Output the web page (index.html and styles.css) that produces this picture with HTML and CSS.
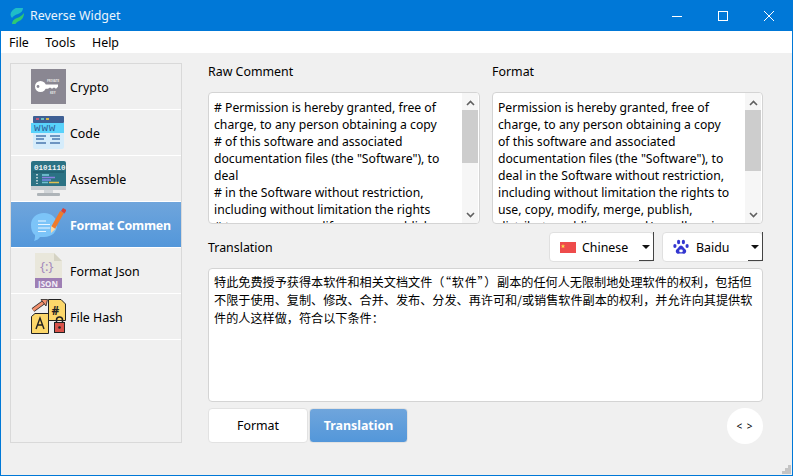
FILE: index.html
```html
<!DOCTYPE html>
<html lang="en">

<head>
    <meta charset="UTF-8">
    <meta name="viewport" content="width=device-width, initial-scale=1.0">
    <title>Reverse Widget</title>
    <link rel="stylesheet" href="styles.css">
</head>

<body>
    <div class="window">
        <div class="titlebar">
            <svg class="app-logo" width="14" height="16" viewBox="0 0 14 16">
                <path d="M6 0H13C13 3 11 5 8 6C5 7 3 8 2 10C0 8 0 5 2 3C3 1.500 4.500 0.500 6 0Z" fill="#1fbcc8" />
                <path d="M14 5C14 9 12 12 9 13C7 14 6 15 5.500 16H2C2 13 4 11 7 10C10 9 12 7.500 14 5Z" fill="#2fc873" />
            </svg>
            <span class="app-title">Reverse Widget</span>
            <div class="win-buttons">
                <div class="win-btn">
                    <svg width="10" height="10" viewBox="0 0 10 10"><path d="M0 5.500H10" stroke="#fff" /></svg>
                </div>
                <div class="win-btn">
                    <svg width="10" height="10" viewBox="0 0 10 10"><rect x="0.500" y="0.500" width="9" height="9" fill="none" stroke="#fff" /></svg>
                </div>
                <div class="win-btn">
                    <svg width="10" height="10" viewBox="0 0 10 10"><path d="M0 0L10 10M10 0L0 10" stroke="#fff" /></svg>
                </div>
            </div>
        </div>

        <div class="menubar">
            <span>File</span>
            <span>Tools</span>
            <span>Help</span>
        </div>

        <div class="main">
            <div class="sidebar">
                <div class="nav-item">
                    <svg class="nav-icon" viewBox="0 0 35 35">
                        <rect width="35" height="35" fill="#8a8792" />
                        <circle cx="9.500" cy="17.500" r="5.500" fill="#fff" />
                        <path d="M13 15.500H27V17.800L25 19.800L23 18.500L21 19.800L19 18.500L17 19.800H13Z" fill="#fff" />
                        <circle cx="7" cy="17.500" r="1.400" fill="#8a8792" />
                        <text x="16" y="13" class="key-text">PRIVATE</text>
                        <text x="19" y="25" class="key-text">KEY</text>
                    </svg>
                    <span class="nav-label">Crypto</span>
                </div>
                <div class="nav-item">
                    <svg class="nav-icon" viewBox="0 0 35 35">
                        <rect x="2" y="1" width="31" height="33" rx="2" fill="#d5ecfb" />
                        <rect x="2" y="1" width="31" height="7" rx="1" fill="#3e5f94" />
                        <rect x="5" y="3" width="3" height="2" fill="#c05a7a" />
                        <rect x="10" y="3" width="3" height="2" fill="#6fc0c0" />
                        <rect x="15" y="3" width="3" height="2" fill="#d8b84a" />
                        <rect x="0" y="8" width="33" height="10" fill="#59d2fb" />
                        <text x="3" y="16" class="www-text">www</text>
                        <path d="M5 21H15M5 24H13M5 28H15M19 21H29M21 24H29M19 28H29" stroke="#4a78b0" stroke-width="1.300" />
                    </svg>
                    <span class="nav-label">Code</span>
                </div>
                <div class="nav-item">
                    <svg class="nav-icon" viewBox="0 0 35 35">
                        <rect x="0" y="0" width="35" height="27" rx="2" fill="#2b7284" />
                        <rect x="0" y="25" width="35" height="4" fill="#c6ccd0" />
                        <rect x="13" y="29" width="9" height="3" fill="#d3d7da" />
                        <rect x="6" y="32" width="23" height="3" rx="1" fill="#aeb4b8" />
                        <text x="3" y="9" class="bin-text">0101110</text>
                        <path d="M2 11H33" stroke="#1c5564" />
                        <path d="M6 13V23" stroke="#dfe8ea" stroke-dasharray="1.500 1.500" stroke-width="1.500" />
                        <path d="M11 14H18" stroke="#7fd0e0" stroke-width="1.500" />
                        <path d="M11 16.500H24" stroke="#8a7fe0" stroke-width="1.500" />
                        <path d="M11 19H20" stroke="#7a8ae8" stroke-width="1.500" />
                        <path d="M11 21.500H17" stroke="#6fc0d0" stroke-width="1.500" />
                        <path d="M18 21.500H28" stroke="#e0c050" stroke-width="1.500" />
                    </svg>
                    <span class="nav-label">Assemble</span>
                </div>
                <div class="nav-item active">
                    <svg class="nav-icon" viewBox="0 0 35 35">
                        <path d="M13 6C21 6 26 11 26 18C26 25 21 30 13 30C12 30 10 30 9 30C8 32 6 33 3 34C4 32 4 30 4 28C1 26 0 22 0 18C0 11 5 6 13 6Z" fill="#7cc4f8" />
                        <path d="M7 14H15M7 17.500H19M7 21H19M7 24.500H15" stroke="#e8f5ff" stroke-width="1.100" />
                        <path d="M22 21L31 5" stroke="#f07a2a" stroke-width="4.500" />
                        <path d="M30 4L32 1L35.500 3L33.500 6.500Z" fill="#d8413a" />
                        <path d="M20 19L24.500 22L20 26Z" fill="#f8d8a8" />
                    </svg>
                    <span class="nav-label">Format Comment</span>
                </div>
                <div class="nav-item">
                    <svg class="nav-icon" viewBox="0 0 35 35">
                        <path d="M4 0H23L31 8V27H4Z" fill="#e9e7db" />
                        <path d="M23 0L31 8H23Z" fill="#d5d3c4" />
                        <rect x="4" y="25" width="27" height="10" fill="#9e7fb4" />
                        <text x="7" y="33.500" class="json-text">JSON</text>
                        <text x="9" y="18" class="brace-text">{:}</text>
                    </svg>
                    <span class="nav-label">Format Json</span>
                </div>
                <div class="nav-item">
                    <svg class="nav-icon" viewBox="0 0 35 35">
                        <path d="M2 11L13 3" stroke="#222" stroke-width="4.500" />
                        <path d="M2 11L13 3" stroke="#f2906e" stroke-width="2.800" />
                        <path d="M10 0.500L16.500 0.500L15 7Z" fill="#f2906e" stroke="#222" stroke-width="0.800" />
                        <path d="M0.500 17.500L4 14.500H17.500V34.500H0.500Z" fill="#fcd76a" stroke="#222" />
                        <path d="M17.500 0.500H30L34.500 5V21.500H17.500Z" fill="#fcd76a" stroke="#222" />
                        <text x="20.500" y="15.500" class="hash-text">#</text>
                        <path d="M5 30L9 19L13 30M6.500 26H11.500" fill="none" stroke="#222" stroke-width="1.400" />
                        <rect x="23.500" y="23.500" width="10" height="10" fill="#d9534a" stroke="#222" />
                        <path d="M25.500 23.500V21A3 3 0 0 1 31.500 21V23.500" fill="none" stroke="#222" stroke-width="1.500" />
                        <circle cx="28.500" cy="28.500" r="1.300" fill="#222" />
                    </svg>
                    <span class="nav-label">File Hash</span>
                </div>
            </div>

            <div class="content">
                <div class="top-row">
                    <div class="text-col">
                        <div class="label">Raw Comment</div>
                        <div class="text-box">
                            <div class="text-body">
                                # Permission is hereby granted, free of<br>
                                charge, to any person obtaining a copy<br>
                                # of this software and associated<br>
                                documentation files (the "Software"), to<br>
                                deal<br>
                                # in the Software without restriction,<br>
                                including without limitation the rights<br>
                                # to use, copy, modify, merge, publish,
                            </div>
                            <div class="scrollbar">
                                <svg class="arrow" width="9" height="6" viewBox="0 0 9 6"><path d="M1 5L4.500 1.500L8 5" fill="none" stroke="#606060" stroke-width="1.600" /></svg>
                                <div class="thumb thumb-raw"></div>
                                <svg class="arrow arrow-down" width="9" height="6" viewBox="0 0 9 6"><path d="M1 1L4.500 4.500L8 1" fill="none" stroke="#606060" stroke-width="1.600" /></svg>
                            </div>
                        </div>
                    </div>
                    <div class="text-col">
                        <div class="label">Format</div>
                        <div class="text-box">
                            <div class="text-body">
                                Permission is hereby granted, free of<br>
                                charge, to any person obtaining a copy<br>
                                of this software and associated<br>
                                documentation files (the "Software"), to<br>
                                deal in the Software without restriction,<br>
                                including without limitation the rights to<br>
                                use, copy, modify, merge, publish,<br>
                                distribute, sublicense, and/or sell copies
                            </div>
                            <div class="scrollbar">
                                <svg class="arrow" width="9" height="6" viewBox="0 0 9 6"><path d="M1 5L4.500 1.500L8 5" fill="none" stroke="#606060" stroke-width="1.600" /></svg>
                                <div class="thumb thumb-format"></div>
                                <svg class="arrow arrow-down" width="9" height="6" viewBox="0 0 9 6"><path d="M1 1L4.500 4.500L8 1" fill="none" stroke="#606060" stroke-width="1.600" /></svg>
                            </div>
                        </div>
                    </div>
                </div>

                <div class="trans-head">
                    <div class="label">Translation</div>
                    <div class="combos">
                        <div class="combo combo-lang">
                            <svg width="16" height="11" viewBox="0 0 16 11">
                                <rect width="16" height="11" fill="#ee4b4b" />
                                <path d="M3 2L3.600 3.600L5 3.600L4 4.600L4.400 6L3 5.200L1.600 6L2 4.600L1 3.600L2.400 3.600Z" fill="#fbd84a" />
                            </svg>
                            <span>Chinese</span>
                        </div>
                        <div class="combo combo-engine">
                            <svg width="16" height="16" viewBox="0 0 16 16" fill="#3336d0">
                                <ellipse cx="5.600" cy="3" rx="1.600" ry="2.200" />
                                <ellipse cx="10.400" cy="3" rx="1.600" ry="2.200" />
                                <ellipse cx="1.900" cy="7" rx="1.600" ry="2" />
                                <ellipse cx="14.100" cy="7" rx="1.600" ry="2" />
                                <path d="M8 6.500C10 6.500 10.500 9 12.500 10.500C14 12 13 15 10.500 14.800C9.500 14.700 9 14.500 8 14.500C7 14.500 6.500 14.700 5.500 14.800C3 15 2 12 3.500 10.500C5.500 9 6 6.500 8 6.500Z" />
                                <rect x="6.300" y="10.500" width="3.400" height="2.800" rx="1" fill="#fff" />
                            </svg>
                            <span>Baidu</span>
                        </div>
                    </div>
                </div>

                <div class="trans-box">
                    特此免费授予获得本软件和相关文档文件<span class="quoted">（“软件”）</span>副本的任何人无限制地处理软件的权利，包括但<br>
                    不限于使用、复制、修改、合并、发布、分发、再许可和/或销售软件副本的权利，并允许向其提供软<br>
                    件的人这样做，符合以下条件：
                </div>

                <div class="bottom-row">
                    <div class="tabs">
                        <div class="tab">Format</div>
                        <div class="tab tab-active">Translation</div>
                    </div>
                    <div class="round-btn">&lt; &gt;</div>
                </div>
            </div>
        </div>

        <svg class="size-grip" width="9" height="9" viewBox="0 0 9 9" fill="#c4c4c4">
            <rect x="6" y="0" width="3" height="3" />
            <rect x="3" y="3" width="3" height="3" />
            <rect x="6" y="3" width="3" height="3" />
            <rect x="0" y="6" width="3" height="3" />
            <rect x="3" y="6" width="3" height="3" />
            <rect x="6" y="6" width="3" height="3" />
        </svg>
    </div>
</body>

</html>
```

FILE: styles.css
```css
body {
    font-family: "Noto Sans", "Noto Sans CJK SC", sans-serif;
    font-size: 12.4px;
    margin: 0;
    padding: 0;
    background-color: #f0f0f0;
    overflow: hidden;
}

.window {
    position: relative;
    box-sizing: border-box;
    width: 793px;
    height: 476px;
    border: 1px solid #0078d7;
    border-top: none;
    display: flex;
    flex-direction: column;
    color: #000;
}

.titlebar {
    height: 31px;
    flex: none;
    background-color: #0078d7;
    color: #fff;
    display: flex;
    align-items: center;
    padding-left: 9px;
}

.app-logo {
    margin-right: 6px;
}

.app-title {
    color: #eaf4fc;
}

.win-buttons {
    margin-left: auto;
    display: flex;
}

.win-btn {
    width: 46px;
    height: 31px;
    display: flex;
    align-items: center;
    justify-content: center;
}

.menubar {
    height: 22px;
    flex: none;
    background-color: #fff;
    display: flex;
    align-items: center;
    gap: 16.5px;
    padding-left: 8px;
}

.main {
    flex: 1;
    display: flex;
    padding: 10px 29px 0 9px;
}

.sidebar {
    box-sizing: border-box;
    width: 172px;
    height: 380px;
    flex: none;
    border: 1px solid #d9d9d9;
    overflow: hidden;
}

.nav-item {
    height: 45px;
    border-bottom: 1px solid #fff;
    display: flex;
    align-items: center;
    padding: 0 10px 0 20px;
    gap: 4px;
    white-space: nowrap;
}

.nav-icon {
    width: 35px;
    height: 35px;
    flex: none;
}

.nav-label {
    min-width: 0;
    overflow: hidden;
    padding-top: 2px;
}

.nav-item.active {
    background: linear-gradient(#6fa5dc, #5397da);
    color: #fff;
    font-weight: bold;
    letter-spacing: -0.2px;
}

.key-text {
    font-size: 3px;
    fill: #e8e8e8;
    font-weight: bold;
}

.www-text {
    font-size: 11px;
    fill: #2f5f98;
    font-family: "Liberation Mono", monospace;
    letter-spacing: 0.8px;
}

.bin-text {
    font-size: 7.5px;
    fill: #f0f4f5;
    font-family: "Liberation Mono", monospace;
    font-weight: bold;
}

.json-text {
    font-size: 8px;
    fill: #f4eef8;
    font-weight: bold;
}

.brace-text {
    font-size: 13px;
    fill: #a48abb;
}

.hash-text {
    font-size: 12px;
    fill: #222;
    font-weight: bold;
}

.content {
    flex: 1;
    margin-left: 26px;
    min-width: 0;
    display: flex;
    flex-direction: column;
}

.top-row {
    display: flex;
    gap: 12px;
}

.text-col {
    flex: 1;
    min-width: 0;
}

.text-col:first-child {
    flex: none;
    width: 272px;
}

.label {
    height: 17px;
    line-height: 17px;
}

.text-col .label {
    margin-bottom: 12px;
}

.text-box {
    box-sizing: border-box;
    height: 132px;
    background-color: #fff;
    border: 1px solid #d4d4d4;
    border-radius: 4px;
    display: flex;
    overflow: hidden;
}

.text-body {
    flex: 1;
    min-width: 0;
    padding: 6px 0 0 5px;
    font-size: 12.2px;
    line-height: 17px;
    white-space: nowrap;
    overflow: hidden;
}

.scrollbar {
    width: 16px;
    flex: none;
    margin-right: 1px;
    background-color: #f6f6f6;
    display: flex;
    flex-direction: column;
    align-items: center;
    padding-top: 7px;
    box-sizing: border-box;
}

.arrow {
    flex: none;
}

.thumb {
    width: 100%;
    flex: none;
    margin-top: 4px;
    background-color: #cdcdcd;
}

.thumb-raw {
    height: 53px;
}

.thumb-format {
    height: 61px;
}

.arrow-down {
    margin-top: auto;
    margin-bottom: 5px;
}

.trans-head {
    height: 30px;
    margin-top: 8px;
    display: flex;
    align-items: center;
    justify-content: space-between;
}

.combos {
    display: flex;
    gap: 8px;
}

.combo {
    position: relative;
    box-sizing: border-box;
    height: 30px;
    background-color: #fff;
    border: 1px solid #e0e0e0;
    border-radius: 4px;
    display: flex;
    align-items: center;
    padding-left: 10px;
    gap: 6px;
}

.combo-lang {
    width: 105px;
}

.combo-engine {
    width: 101px;
    gap: 7px;
}

/* dropdown part of the combobox */
.combo::before {
    content: "";
    position: absolute;
    right: -1px;
    top: -1px;
    width: 14px;
    height: 28px;
    border-right: 1px solid #444;
    border-bottom: 1px solid #444;
}

.combo::after {
    content: "";
    position: absolute;
    right: 3px;
    top: 12px;
    border-left: 4px solid transparent;
    border-right: 4px solid transparent;
    border-top: 4px solid #111;
}

.trans-box {
    box-sizing: border-box;
    height: 134px;
    margin-top: 6px;
    padding: 4px 5px;
    background-color: #fff;
    border: 1px solid #d4d4d4;
    border-radius: 4px;
    font-family: "Noto Sans CJK SC", "Noto Sans", sans-serif;
    font-size: 12.13px;
    line-height: 18px;
    white-space: nowrap;
    overflow: hidden;
}

.quoted {
    letter-spacing: 0.7px;
}

.bottom-row {
    margin-top: 6px;
    display: flex;
    justify-content: space-between;
    align-items: flex-start;
}

.tabs {
    display: flex;
    gap: 1px;
}

.tab {
    box-sizing: border-box;
    width: 100px;
    height: 35px;
    background-color: #fff;
    border: 1px solid #e2e2e2;
    border-radius: 4px;
    display: flex;
    align-items: center;
    justify-content: center;
}

.tab-active {
    width: 99px;
    background: linear-gradient(#6fa5dc, #5397da);
    color: #fff;
    font-weight: bold;
}

.round-btn {
    width: 36px;
    height: 36px;
    border-radius: 50%;
    background-color: #fff;
    font-size: 10px;
    letter-spacing: 1px;
    display: flex;
    align-items: center;
    justify-content: center;
}

.size-grip {
    position: absolute;
    right: 1px;
    bottom: 1px;
}
```
